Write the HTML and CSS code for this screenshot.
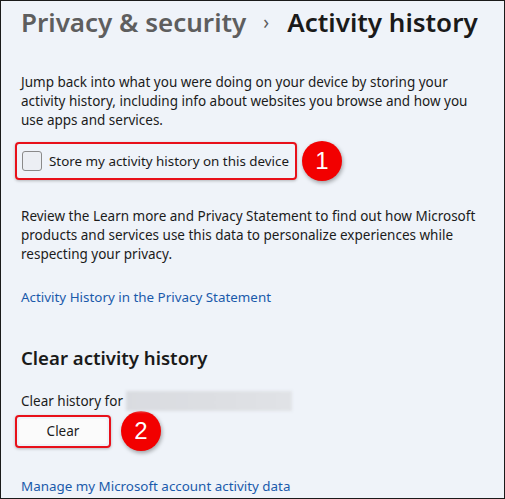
FILE: index.html
```html
<!DOCTYPE html>
<html>
<head>
<meta charset="utf-8">
<link rel="stylesheet" href="styles.css">
</head>
<body>
<div class="frame">
  <h1 class="title"><span class="crumb">Privacy &amp; security</span><span class="chev">&#x203A;</span><span class="current">Activity history</span></h1>
  <p class="para">Jump back into what you were doing on your device by storing your activity history, including info about websites you browse and how you use apps and services.</p>
  <div class="row">
    <div class="hl hl-check">
      <span class="checkbox"></span>
      <span class="label">Store my activity history on this device</span>
    </div>
    <span class="badge">1</span>
  </div>
  <p class="para para2">Review the Learn more and Privacy Statement to find out how Microsoft products and services use this data to personalize experiences while respecting your privacy.</p>
  <a class="link link1">Activity History in the Privacy Statement</a>
  <h2 class="sub">Clear activity history</h2>
  <div class="forrow"><span>Clear history for</span><span class="blur"></span></div>
  <div class="row row2">
    <div class="hl hl-btn"><span class="btn">Clear</span></div>
    <span class="badge">2</span>
  </div>
  <a class="link link2">Manage my Microsoft account activity data</a>
</div>
</body>
</html>
```
FILE: styles.css
```css
html, body { margin: 0; padding: 0; }
body { font-family: "Noto Sans", "Open Sans", sans-serif; color: #1b1b1b; }
.frame {
  width: 505px; height: 499px; box-sizing: border-box;
  border: 1px solid #1a1a1a;
  background: #eff3f9;
  padding: 0 0 0 20px;
  overflow: hidden;
}
.title {
  margin: 2px 0 0 0;
  font-size: 26px; font-weight: 600; line-height: 38px;
  display: flex; align-items: center; white-space: nowrap;
}
.crumb { color: #5e5e5e; }
.chev { color: #5e5e5e; font-size: 19px; font-weight: 400; margin: 0 18px 0 17px; }
.current { color: #1a1a1a; }
.para {
  margin: 32px 0 0 0; font-size: 13.5px; line-height: 19px; width: 462px; color: #1b1b1b;
}
.row { display: flex; align-items: center; margin-top: 11px; margin-left: -6px; }
.hl {
  border: 2px solid #e8101a; border-radius: 4px; box-sizing: border-box;
  box-shadow: 0 1px 3px rgba(0,0,0,0.25);
  display: flex; align-items: center;
}
.hl-check { width: 282px; height: 38px; padding-left: 5px; }
.checkbox {
  border: 1px solid #8a8a8a; border-radius: 3px;
  background: #eceff4; box-sizing: border-box; width: 20px; height: 20px;
}
.label { margin-left: 7px; font-size: 13.4px; }
.badge {
  width: 40px; height: 40px; border-radius: 50%; background: #f20000;
  color: #fff; font-family: "Liberation Sans", Arial, sans-serif; font-size: 24px;
  display: flex; align-items: center; justify-content: center;
  margin-left: 5px;
  box-shadow: 1px 2px 4px rgba(0,0,0,0.35);
}
.para2 { margin-top: 26px; }
.link { display: block; color: #1a5aab; font-size: 13.4px; line-height: 19px; }
.link1 { margin-top: 24px; }
.sub { margin: 38px 0 0 0; font-size: 18.6px; font-weight: 600; line-height: 26px; color: #1a1a1a; }
.forrow { display: flex; align-items: center; margin-top: 20px; font-size: 13.5px; line-height: 20px; }
.blur {
  width: 166px; height: 20px; margin-left: 3px;
  background: linear-gradient(90deg, #d9dbe0, #dcdee2 50%, #e0e2e6);
  filter: blur(1.5px);
}
.row2 { margin-top: 0; }
.hl-btn { width: 96px; height: 33px; padding: 2px; }
.btn {
  flex: 1; height: 100%; background: #fbfbfb; border-radius: 3px;
  display: flex; align-items: center; justify-content: center; font-size: 13.5px;
}
.row2 .badge { margin-left: 10px; }
.link2 { margin-top: 26px; }
```
